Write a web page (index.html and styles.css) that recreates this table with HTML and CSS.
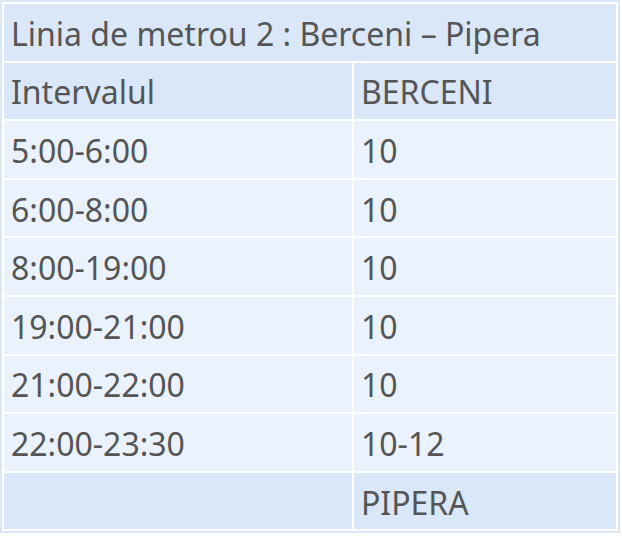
FILE: index.html
```html
<!DOCTYPE html>
<html>
<head>
<meta charset="utf-8">
<link rel="stylesheet" href="styles.css">
</head>
<body>
<table class="schedule">
  <tr class="head"><td colspan="2">Linia de metrou 2 : Berceni – Pipera</td></tr>
  <tr class="head"><td class="c1">Intervalul</td><td>BERCENI</td></tr>
  <tr><td>5:00-6:00</td><td>10</td></tr>
  <tr><td>6:00-8:00</td><td>10</td></tr>
  <tr><td>8:00-19:00</td><td>10</td></tr>
  <tr><td>19:00-21:00</td><td>10</td></tr>
  <tr><td>21:00-22:00</td><td>10</td></tr>
  <tr><td>22:00-23:30</td><td>10-12</td></tr>
  <tr class="head"><td></td><td>PIPERA</td></tr>
</table>
</body>
</html>
```
FILE: styles.css
```css
html, body {
  margin: 0;
  padding: 0;
  background: #ffffff;
}
.schedule {
  border: 2px solid #d9e7f9;
  border-spacing: 2px;
  width: 620px;
  font-family: "Noto Sans", "Open Sans", sans-serif;
  font-size: 32px;
  color: #555555;
}
.schedule td {
  background: #eaf3fd;
  height: 56.6px;
  padding: 2px 7px 0;
  box-sizing: border-box;
  vertical-align: middle;
  white-space: nowrap;
}
.schedule .head td {
  background: #d9e7f9;
}
.schedule .c1 {
  width: 348px;
}
```
